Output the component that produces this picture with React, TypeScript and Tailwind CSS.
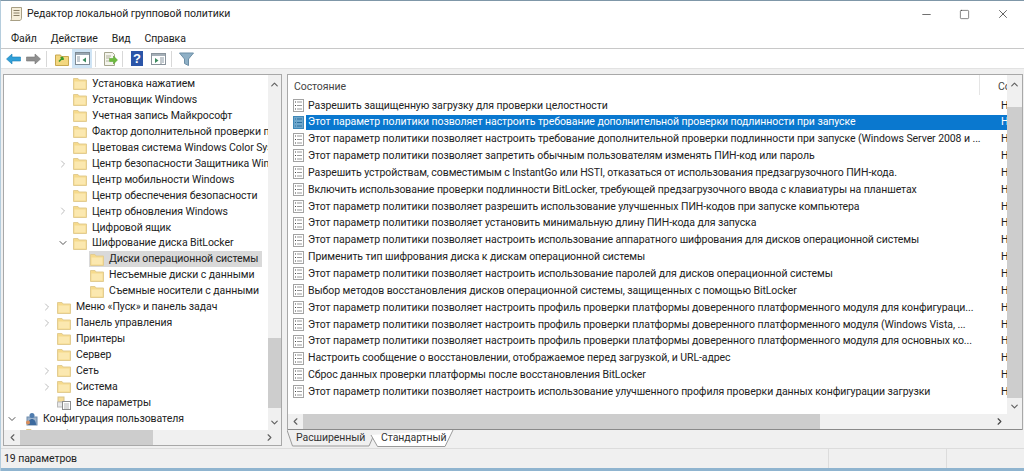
import React from "react";
import { ChevronDown, ChevronLeft, ChevronRight, ChevronUp, Minus, Square, X } from "lucide-react";

const treeRows = [
  { label: "Установка нажатием", level: 2 },
  { label: "Установщик Windows", level: 2 },
  { label: "Учетная запись Майкрософт", level: 2 },
  { label: "Фактор дополнительной проверки подлинности", level: 2 },
  { label: "Цветовая система Windows Color System", level: 2 },
  { label: "Центр безопасности Защитника Windows", level: 2, arrow: "right" },
  { label: "Центр мобильности Windows", level: 2 },
  { label: "Центр обеспечения безопасности", level: 2 },
  { label: "Центр обновления Windows", level: 2, arrow: "right" },
  { label: "Цифровой ящик", level: 2 },
  { label: "Шифрование диска BitLocker", level: 2, arrow: "down" },
  { label: "Диски операционной системы", level: 3, selected: true },
  { label: "Несъемные диски с данными", level: 3 },
  { label: "Съемные носители с данными", level: 3 },
  { label: "Меню «Пуск» и панель задач", level: 1, arrow: "right" },
  { label: "Панель управления", level: 1, arrow: "right" },
  { label: "Принтеры", level: 1 },
  { label: "Сервер", level: 1 },
  { label: "Сеть", level: 1, arrow: "right" },
  { label: "Система", level: 1, arrow: "right" },
  { label: "Все параметры", level: 1, icon: "all" },
  { label: "Конфигурация пользователя", level: 0, arrow: "down", icon: "user" },
  { label: "Конфигурация программ", level: 4 },
];

const policies = [
  "Разрешить защищенную загрузку для проверки целостности",
  "Этот параметр политики позволяет настроить требование дополнительной проверки подлинности при запуске",
  "Этот параметр политики позволяет настроить требование дополнительной проверки подлинности при запуске (Windows Server 2008 и ...",
  "Этот параметр политики позволяет запретить обычным пользователям изменять ПИН-код или пароль",
  "Разрешить устройствам, совместимым с InstantGo или HSTI, отказаться от использования предзагрузочного ПИН-кода.",
  "Включить использование проверки подлинности BitLocker, требующей предзагрузочного ввода с клавиатуры на планшетах",
  "Этот параметр политики позволяет разрешить использование улучшенных ПИН-кодов при запуске компьютера",
  "Этот параметр политики позволяет установить минимальную длину ПИН-кода для запуска",
  "Этот параметр политики позволяет настроить использование аппаратного шифрования для дисков операционной системы",
  "Применить тип шифрования диска к дискам операционной системы",
  "Этот параметр политики позволяет настроить использование паролей для дисков операционной системы",
  "Выбор методов восстановления дисков операционной системы, защищенных с помощью BitLocker",
  "Этот параметр политики позволяет настроить профиль проверки платформы доверенного платформенного модуля для конфигураци...",
  "Этот параметр политики позволяет настроить профиль проверки платформы доверенного платформенного модуля (Windows Vista, ...",
  "Этот параметр политики позволяет настроить профиль проверки платформы доверенного платформенного модуля для основных ко...",
  "Настроить сообщение о восстановлении, отображаемое перед загрузкой, и URL-адрес",
  "Сброс данных проверки платформы после восстановления BitLocker",
  "Этот параметр политики позволяет настроить использование улучшенного профиля проверки данных конфигурации загрузки",
];

const Folder = () => (
  <svg width="14" height="13" viewBox="0 0 14 13" className="shrink-0">
    <path d="M.5 1.500h4.500l1 1.500h7.500v9.500H.5z" fill="#f6da8c" stroke="#e2cc92" />
    <path d="M1.500 4.500h11v7h-11z" fill="#fbe8b0" />
  </svg>
);

const PolicyIcon = ({ selected }: { selected?: boolean }) => (
  <svg width="11" height="13" viewBox="0 0 11 13" className="shrink-0">
    <rect x="0.5" y="0.5" width="10" height="12" fill={selected ? "#6ea7cc" : "#fff"} stroke={selected ? "#3f88b8" : "#a3a3a3"} />
    <path d="M2 3h1M2 6.500h1M2 10h1" stroke={selected ? "#2b6f9f" : "#444"} />
    <path d="M4 3h5M4 6.500h5M4 10h5" stroke={selected ? "#2b6f9f" : "#999"} />
  </svg>
);

const UserIcon = () => (
  <svg width="13" height="14" viewBox="0 0 13 14" className="shrink-0">
    <rect x="2" y="5" width="10" height="8" fill="#9db3cc" stroke="#6f8cac" />
    <circle cx="7" cy="3.500" r="2.500" fill="#4f7cae" />
    <path d="M3 13c0-4 2-6 4-6s4 2 4 6z" fill="#3c6a9e" />
    <circle cx="3" cy="10.500" r="2" fill="#d98e5a" />
  </svg>
);

const AllIcon = () => (
  <svg width="14" height="14" viewBox="0 0 14 14" className="shrink-0">
    <rect x="1" y="1" width="6" height="5" fill="#f5dc98" stroke="#d8c38a" />
    <rect x="0.5" y="6" width="5" height="5" fill="#e8e8e8" stroke="#bbb" />
    <rect x="5.500" y="5.500" width="8" height="8" fill="#fff" stroke="#8d8d8d" />
    <path d="M7 8h5M7 10h5M7 12h5" stroke="#b5b5b5" />
  </svg>
);

const TreeRow = ({ row }: { row: (typeof treeRows)[number] }) => {
  const indent =
    row.level === 0 ? "pl-px" : row.level === 1 ? "pl-[36px]" : row.level === 2 ? "pl-[52px]" : row.level === 4 ? "pl-[19px]" : "pl-[85px]";
  const inner = row.level === 0 ? "gap-[5px] pl-[6px]" : row.level === 3 ? "gap-[5px] pl-px" : "gap-[5px] pl-[3px]";
  return (
    <div className={`flex h-[15.950px] items-center whitespace-nowrap ${indent}`}>
      {row.level < 3 && (
        <span className="flex w-[14px] shrink-0 justify-center">
          {row.arrow === "right" && <ChevronRight size={12} strokeWidth={1.5} className="text-[#a6a6a6]" />}
          {row.arrow === "down" && <ChevronDown size={12} strokeWidth={2} className="text-[#555]" />}
        </span>
      )}
      <span className={`flex h-[15.950px] items-center ${inner} ${row.selected ? "w-[173px] shrink-0 bg-[#d9d9d9]" : ""}`}>
        {row.icon === "user" ? <UserIcon /> : row.icon === "all" ? <AllIcon /> : <Folder />}
        <span>{row.label}</span>
      </span>
    </div>
  );
};

const Chevron = ({ dir, dark }: { dir: "up" | "down" | "left" | "right"; dark?: boolean }) => {
  const Icon = dir === "up" ? ChevronUp : dir === "down" ? ChevronDown : dir === "left" ? ChevronLeft : ChevronRight;
  return <Icon size={11} strokeWidth={2.5} className={dark ? "text-[#444]" : "text-[#606060]"} />;
};

const Sep = ({ className }: { className: string }) => <span className={`h-4 w-px bg-[#d8d8d8] ${className}`} />;

const Toolbar = () => (
  <div className="flex h-[19px] shrink-0 items-center pl-[5px]">
    <svg width="15" height="12" viewBox="0 0 15 12" className="shrink-0">
      <path d="M.5 6 6 1v3h8.500v4H6v3z" fill="#2f9fd8" stroke="#1b7fb5" strokeWidth="0.6" />
    </svg>
    <svg width="15" height="12" viewBox="0 0 15 12" className="ml-[5px] shrink-0">
      <path d="M14.500 6 9 1v3H.5v4H9v3z" fill="#8f8f8f" stroke="#777" strokeWidth="0.6" />
    </svg>
    <Sep className="ml-[5px]" />
    <svg width="14" height="14" viewBox="0 0 14 14" className="ml-[8px] shrink-0">
      <path d="M.5 3h5l1 1.500h7v9H.5z" fill="#f3d77f" stroke="#c8a850" />
      <path d="M4 9.500 8 5.500M8 5.500H5.500M8 5.500V8" stroke="#3c9a2c" strokeWidth="1.6" fill="none" />
    </svg>
    <span className="ml-[3px] flex h-[19px] w-[20px] shrink-0 items-center justify-center bg-[#cfe4f5]">
      <svg width="15" height="13" viewBox="0 0 15 13">
        <rect x="0.5" y="0.5" width="14" height="12" fill="#fff" stroke="#7d8a94" />
        <path d="M1 1h13v2H1z" fill="#9aa7b2" />
        <path d="M2 5h3M2 7h3M2 9h3" stroke="#8a9aa6" />
        <path d="M11 5.500v5L7.500 8z" fill="#3a8a5c" />
      </svg>
    </span>
    <Sep className="ml-[3px]" />
    <svg width="15" height="14" viewBox="0 0 15 14" className="ml-[7px] shrink-0">
      <path d="M1.500.5h8l2 2v11h-10z" fill="#f4f4ec" stroke="#a5a58e" />
      <path d="M3 4h5M3 6h4M3 9h3" stroke="#b0b09a" />
      <path d="M6.500 6.500h4V4l4 4-4 4V9.500h-4z" fill="#6cbb3c" stroke="#4f9a26" strokeWidth="0.5" />
    </svg>
    <Sep className="ml-[4px]" />
    <span className="ml-[8px] flex h-[15px] w-[12px] shrink-0 items-center justify-center bg-[#2b55a8] font-['Liberation_Sans',sans-serif] text-[13px] leading-none font-bold text-white">?</span>
    <svg width="15" height="12" viewBox="0 0 15 12" className="ml-[8px] shrink-0">
      <rect x="0.5" y="0.5" width="14" height="11" fill="#fff" stroke="#8a949c" />
      <path d="M1 1h13v2H1z" fill="#a5afb7" />
      <path d="M10 4v7" stroke="#8a949c" />
      <path d="M11 5h2M11 7h2M11 9h2" stroke="#8a9aa6" />
      <path d="M4 5v5l3.500-2.500z" fill="#3a8a5c" />
    </svg>
    <Sep className="ml-[5px]" />
    <svg width="15" height="14" viewBox="0 0 15 14" className="ml-[7px] shrink-0">
      <path d="M.5 1h14l-5 6v6.500l-4-2V7z" fill="#8fb0c6" stroke="#6c8ea6" />
    </svg>
  </div>
);

export default function App() {
  return (
    <div className="flex h-[471px] w-[1024px] flex-col overflow-hidden border-t border-l border-t-[#7f97a8] border-l-[#b5cddd] bg-white font-['Roboto',sans-serif] text-[10.500px] tracking-[-0.075px] text-[#222]">
      <div className="flex h-[28px] shrink-0 items-center pb-[2px] pl-[8px]">
        <svg width="14" height="16" viewBox="0 0 14 16" className="shrink-0">
          <path d="M2.500 1.500h10V12c0 1-.5 2-1.500 2.500H1.500c1-.5 1-1.500 1-2.500z" fill="#f5eeda" stroke="#a89f84" />
          <path d="M4.500 4.500h6M4.500 7h6M4.500 9.500h6" stroke="#8a8068" />
        </svg>
        <span className="ml-[4px]">Редактор локальной групповой политики</span>
        <div className="ml-auto flex items-center gap-[26px] pr-[14px]">
          <Minus size={13} strokeWidth={1.2} />
          <Square size={11} strokeWidth={1.2} />
          <X size={14} strokeWidth={1.2} />
        </div>
      </div>
      <div className="flex h-[20px] shrink-0 items-center gap-[14px] border-b border-[#c8c8c8] pl-[10px]">
        <span>Файл</span>
        <span>Действие</span>
        <span>Вид</span>
        <span>Справка</span>
      </div>
      <Toolbar />
      <div className="flex min-h-0 flex-1 gap-[5px] border-t border-[#e2e2e2] bg-[#f0f0f0] pt-[5px] pr-px pl-[2px]">
        <div className="flex h-[372px] w-[279px] shrink-0 flex-col border border-[#a8a8a8]">
          <div className="flex min-h-0 flex-1">
            <div className="min-w-0 flex-1 overflow-hidden bg-white pt-[1px]">
              {treeRows.map((r) => (
                <TreeRow key={r.label} row={r} />
              ))}
            </div>
            <div className="flex w-[13px] shrink-0 flex-col items-center bg-[#f0f0f0]">
              <div className="flex h-4 items-center pt-[2px]"><Chevron dir="up" /></div>
              <div className="mt-[247px] h-[70px] w-full bg-[#cdcdcd]" />
              <div className="mt-auto flex h-4 items-center"><Chevron dir="down" /></div>
            </div>
          </div>
          <div className="flex h-[15px] shrink-0 items-center bg-[#f0f0f0]">
            <div className="flex w-[16px] justify-center"><Chevron dir="left" /></div>
            <div className="h-full w-[133px] bg-[#cdcdcd]" />
            <div className="ml-auto flex w-[24px] justify-center"><Chevron dir="right" /></div>
          </div>
        </div>
        <div className="flex h-[372px] min-w-0 flex-1 flex-col">
          <div className="flex h-[356px] shrink-0 flex-col border border-b-0 border-[#a8a8a8]">
            <div className="flex min-h-0 flex-1">
              <div className="min-w-0 flex-1 overflow-hidden bg-white">
                <div className="flex h-[21px] items-end pb-px pl-[6px] text-[#444]">
                  <span className="w-[685px] shrink-0">Состояние</span>
                  <span className="h-full w-px shrink-0 bg-[#e5e5e5]" />
                  <span className="shrink-0 pl-[18px]">Состояние</span>
                </div>
                <div className="pt-[1px]">
                  {policies.map((p, i) => (
                    <div key={p + i} className="flex h-[16.850px] items-center whitespace-nowrap pl-[5px]">
                      <PolicyIcon selected={i === 1} />
                      <span className={`ml-[2px] flex h-[15px] flex-1 items-center pl-[2px] ${i === 1 ? "bg-[#0a78cf] text-white" : ""}`}>
                        <span className="w-[693px] shrink-0 overflow-hidden">{p}</span>
                        <span>Н</span>
                      </span>
                    </div>
                  ))}
                </div>
              </div>
              <div className="flex w-[15px] shrink-0 flex-col items-center bg-[#f0f0f0]">
                <div className="flex h-[18px] items-center pt-[2px]"><Chevron dir="up" /></div>
                <div className="mt-[14px] h-[292px] w-full bg-[#cdcdcd]" />
                <div className="mt-auto flex h-4 items-center"><Chevron dir="down" /></div>
              </div>
            </div>
            <div className="flex h-[16px] shrink-0 items-center border-b border-[#8a8a8a] bg-[#f0f0f0]">
              <div className="flex w-[15px] justify-center"><Chevron dir="left" /></div>
              <div className="h-full w-[517px] bg-[#cdcdcd]" />
              <div className="ml-auto flex w-[28px] justify-start"><Chevron dir="right" dark /></div>
            </div>
          </div>
          <div className="relative flex h-[16px] shrink-0 pl-[9px] text-[#333]">
            <svg width="170" height="17" viewBox="0 0 170 17" className="absolute top-0 left-0">
              <path d="M0 0 5.500 16H82l4-9" fill="#f0f0f0" stroke="#9a9a9a" />
              <path d="M84 5 90.500 16.500H158L166 0" fill="#fff" stroke="#9a9a9a" />
            </svg>
            <span className="relative flex h-[16px] w-[78px] items-center">Расширенный</span>
            <span className="relative ml-[7px] flex h-[16px] w-[70px] items-center">Стандартный</span>
          </div>
        </div>
      </div>
      <div className="flex h-[20px] shrink-0 items-center border-t border-[#dcdcdc] bg-[#f0f0f0] pl-[3px]">
        <span className="w-[824px] shrink-0">19 параметров</span>
        <span className="h-full w-px bg-[#dcdcdc]" />
        <span className="ml-[117px] h-full w-px bg-[#dcdcdc]" />
      </div>
      <div className="h-[3px] shrink-0 bg-[#8fb4cf]" />
    </div>
  );
}
